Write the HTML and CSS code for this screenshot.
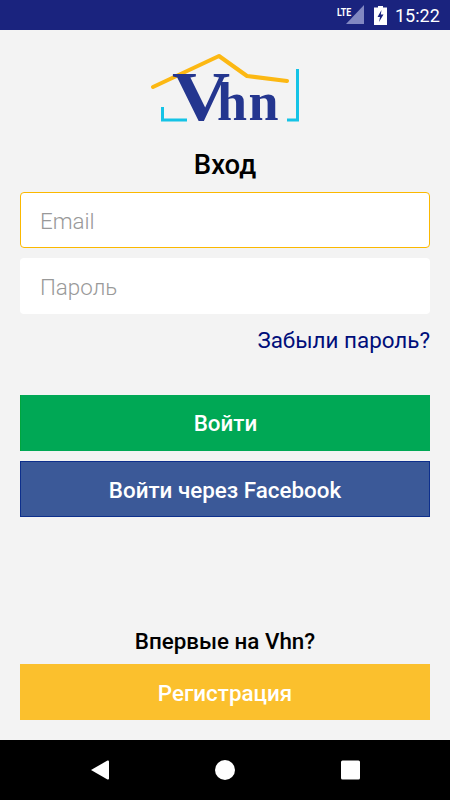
FILE: index.html
```html
<!DOCTYPE html>
<html lang="ru">
<head>
<meta charset="utf-8">
<title>Вход</title>
<link rel="stylesheet" href="styles.css">
</head>
<body>
<div class="screen">
  <header class="status">
    <span class="lte-wrap">
      <span class="lte">LTE</span>
      <svg class="signal" width="18" height="19" viewBox="0 0 18 19"><path d="M18 0V19H0Z" fill="#8288c2"/></svg>
    </span>
    <svg class="battery" width="13" height="19" viewBox="0 0 13 19"><path fill="#fff" d="M4 0h5v1.500h4V19H0V1.500h4z"/><path fill="#1a237e" d="M7.500 4 3.500 11h2.500L5 16l4.500-7.500H6.800z"/></svg>
    <span class="clock">15:22</span>
  </header>
  <main class="content">
    <div class="logo">
      <svg class="logo-art" width="170" height="80" viewBox="0 0 170 80">
        <path d="M3 37 69 6 97 26 137 31" fill="none" stroke="#fcb813" stroke-width="4" stroke-linejoin="round" stroke-linecap="round"/>
        <path d="M12.500 57V70H37M147.500 19V70H137" fill="none" stroke="#14c3e6" stroke-width="3"/>
      </svg>
      <div class="logo-text"><span class="logo-v">V</span><span class="logo-hn">hn</span></div>
    </div>
    <h1 class="title">Вход</h1>
    <div class="field field-focus">Email</div>
    <div class="field">Пароль</div>
    <a class="forgot">Забыли пароль?</a>
    <a class="btn btn-green">Войти</a>
    <a class="btn btn-blue">Войти через Facebook</a>
    <div class="spacer"></div>
    <p class="first">Впервые на Vhn?</p>
    <a class="btn btn-yellow">Регистрация</a>
  </main>
  <nav class="nav">
    <svg width="20" height="20" viewBox="0 0 20 20"><path d="M1 10 17.500.5q1.500-.4 1.500 1v17q0 1.400-1.500 1z" fill="#fff"/></svg>
    <svg width="20" height="20" viewBox="0 0 20 20"><circle cx="10" cy="10" r="10" fill="#fff"/></svg>
    <svg width="20" height="20" viewBox="0 0 20 20"><rect x="1" y="0.500" width="19" height="19" rx="1.500" fill="#fff"/></svg>
  </nav>
</div>
</body>
</html>
```
FILE: styles.css
```css
* { box-sizing: border-box; }
html, body { margin: 0; padding: 0; }
body { font-family: Roboto, sans-serif; background: #f3f3f3; }
.screen { width: 450px; height: 800px; display: flex; flex-direction: column; overflow: hidden; }
.status { height: 30px; background: #1a237e; color: #fff; display: flex; align-items: center; justify-content: flex-end; flex: none; }
.lte-wrap { position: relative; width: 24px; height: 20px; margin-right: 10px; }
.lte { position: absolute; left: -3px; top: 1px; font-size: 11px; font-weight: 700; transform: scaleX(.8); transform-origin: left top; line-height: 13px; z-index: 1; }
.signal { position: absolute; right: 0; top: 0; }
.battery { margin-right: 8px; }
.clock { font-size: 18px; width: 55px; }
.content { flex: 1; padding: 0 20px 20px; display: flex; flex-direction: column; background: #f3f3f3; }
.logo { position: relative; height: 94px; margin-top: 20px; flex: none; }
.logo-art { position: absolute; left: 130px; top: 0; overflow: visible; }
.logo-text { position: absolute; left: 152px; top: 12px; display: flex; align-items: baseline; font-family: "Liberation Serif", serif; font-weight: 700; color: #24368f; line-height: 70px; }
.logo-v { font-size: 70px; letter-spacing: -7px; display: inline-block; transform: scaleX(1.15); transform-origin: left bottom; margin-right: 1.500px; }
.logo-hn { font-size: 54px; letter-spacing: 1.500px; }
.title { margin: 0; height: 48px; font-size: 27.500px; line-height: 42px; font-weight: 500; text-align: center; color: #000; }
.field { height: 56px; background: #fff; border-radius: 4px; padding: 0 20px; font-size: 22.400px; font-weight: 300; line-height: 58px; color: #999; margin-bottom: 10px; flex: none; }
.field-focus { border: 1px solid #fbb800; padding: 0 19px; line-height: 56px; }
.forgot { align-self: flex-end; font-size: 22.400px; line-height: 32px; color: #000e7a; height: 71px; }
.btn { display: block; height: 56px; flex: none; text-align: center; font-size: 22.400px; font-weight: 500; line-height: 58px; color: #fff; margin-bottom: 10px; }
.btn-green { background: #00a855; border-left: 1px solid #00a53e; line-height: 57px; }
.btn-blue { background: #3b5998; border: 1px solid #0d2f8c; line-height: 56px; }
.btn-yellow { background: #fbc02d; margin-bottom: 0; }
.spacer { flex: 1; }
.first { margin: 0 0 9px; font-size: 22.400px; line-height: 28px; font-weight: 500; text-align: center; color: #000; }
.nav { height: 60px; flex: none; background: #000; display: flex; align-items: center; justify-content: space-between; padding: 0 90px; }
```
